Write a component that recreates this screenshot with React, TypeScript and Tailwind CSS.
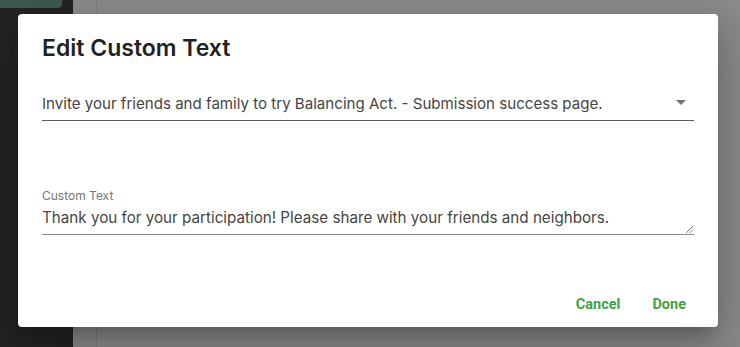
import React from "react";

export default function App() {
  return (
    <div
      className="relative w-[740px] h-[347px] overflow-hidden flex"
      style={{ fontFamily: "Inter, Roboto, 'Liberation Sans', sans-serif" }}
    >
      {/* Sidebar behind the backdrop */}
      <div className="w-[73px] h-full bg-[#232523]">
        <div className="w-[62px] h-[8px] bg-[#3e5a51] rounded-br-[4px]" />
      </div>
      <div className="flex-1 h-full bg-[#8b8b8b] flex">
        <div className="w-[24px] h-full border-r border-[#7f7f7f]" />
      </div>

      {/* Dialog */}
      <div className="absolute left-[18px] top-[14px] w-[700px] h-[313px] bg-white rounded-[4px] shadow-[0_11px_15px_-7px_rgba(0,0,0,0.2),0_24px_38px_3px_rgba(0,0,0,0.14),0_9px_46px_8px_rgba(0,0,0,0.12)] flex flex-col px-[24px] pt-[20px]">
        <h2 className="text-[23px] leading-[28px] font-semibold text-[#222]">
          Edit Custom Text
        </h2>

        {/* Select */}
        <div className="mt-[28px] flex items-center h-[31px] border-b border-[#5a5a5a]">
          <span className="flex-1 text-[15.1px] text-[#454545] leading-[20px] pb-[2px]">
            Invite your friends and family to try Balancing Act. - Submission success page.
          </span>
          <svg width="10" height="5" viewBox="0 0 10 5" className="mr-[8px] mb-[6px]">
            <path d="M0 0h10L5 5z" fill="#757575" />
          </svg>
        </div>

        {/* Textarea */}
        <div className="mt-[68px] flex flex-col">
          <span className="text-[12px] leading-[14px] text-[#757575]">Custom Text</span>
          <div className="relative mt-[5px] pb-[6px] border-b border-[#8a8a8a]">
            <span className="block text-[15.2px] leading-[20px] text-[#454545]">
              Thank you for your participation! Please share with your friends and neighbors.
            </span>
            <svg width="7" height="7" viewBox="0 0 7 7" className="absolute right-[1px] bottom-[1px]">
              <path d="M7 0L0 7M7 3.5L3.5 7" stroke="#555" strokeWidth="0.8" />
            </svg>
          </div>
        </div>

        {/* Actions */}
        <div className="mt-auto mb-[4px] flex justify-end gap-[16px]">
          <button
            className="px-[8px] h-[36px] text-[14.5px] font-bold text-[#43a047]"
            style={{ fontFamily: "Roboto, 'Liberation Sans', sans-serif" }}
          >
            Cancel
          </button>
          <button
            className="px-[8px] h-[36px] text-[14.5px] font-bold text-[#43a047]"
            style={{ fontFamily: "Roboto, 'Liberation Sans', sans-serif" }}
          >
            Done
          </button>
        </div>
      </div>
    </div>
  );
}
